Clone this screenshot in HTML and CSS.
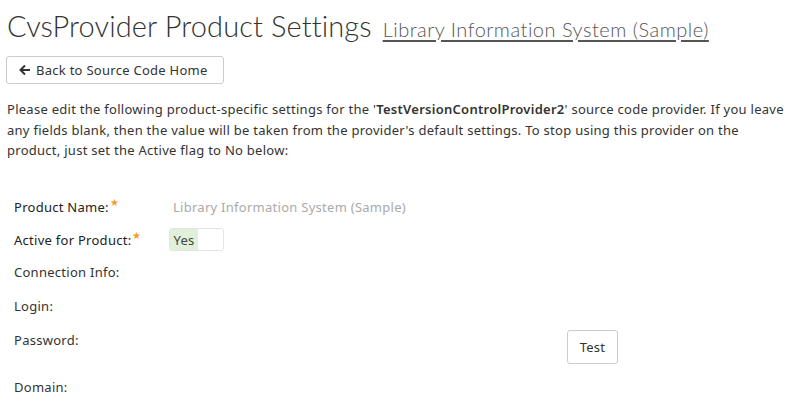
FILE: index.html
```html
<!DOCTYPE html>
<html>
<head>
<meta charset="utf-8">
<link rel="stylesheet" href="styles.css">
</head>
<body>
<div class="page">
  <h1 class="title">CvsProvider Product Settings <a class="subtitle" href="#">Library Information System (Sample)</a></h1>
  <button class="btn btn-back"><svg class="arrow" width="12" height="12" viewBox="0 0 12 12"><path d="M6 1.5 L1.5 6 L6 10.5 M1.5 6 H11" fill="none" stroke="#333" stroke-width="2" stroke-linejoin="miter"/></svg>Back to Source Code Home</button>
  <p class="intro">Please edit the following product-specific settings for the '<b>TestVersionControlProvider2</b>' source code provider. If you leave any fields blank, then the value will be taken from the provider's default settings. To stop using this provider on the product, just set the Active flag to No below:</p>
  <div class="form">
    <div class="row r-name">
      <div class="label req">Product Name:<span class="star">★</span></div>
      <div class="value muted">Library Information System (Sample)</div>
    </div>
    <div class="row r-active">
      <div class="label req">Active for Product:<span class="star">★</span></div>
      <div class="value"><div class="toggle"><span class="on">Yes</span><span class="off"></span></div></div>
    </div>
    <div class="row r-conn">
      <div class="label">Connection Info:</div>
      <div class="value"></div>
    </div>
    <div class="row r-login">
      <div class="label">Login:</div>
      <div class="value"></div>
    </div>
    <div class="row r-pass">
      <div class="label">Password:</div>
      <div class="value test-cell"><button class="btn btn-test">Test</button></div>
    </div>
    <div class="row r-domain">
      <div class="label">Domain:</div>
      <div class="value"></div>
    </div>
  </div>
</div>
</body>
</html>
```
FILE: styles.css
```css
html, body { margin: 0; padding: 0; background: #fff; }
body { font-family: "Noto Sans", "Open Sans", sans-serif; font-size: 13px; color: #333; letter-spacing: 0.27px; }
.page { padding: 0 7px; }
.title {
  margin: 0; padding-top: 6px; height: 40px;
  font-family: Lato, sans-serif; font-weight: 300; font-size: 29px; line-height: 40px;
  color: #333; letter-spacing: 0.1px; white-space: nowrap;
}
.subtitle { font-size: 20px; color: #555; text-decoration: underline; text-underline-offset: 3px; letter-spacing: 0.5px; margin-left: 3px; }
.btn {
  font-family: "Noto Sans", sans-serif; font-size: 13px; color: #333; letter-spacing: 0.27px;
  background: #fff; border: 1px solid #ccc; border-radius: 3px; cursor: pointer;
}
.btn-back { margin: 10px 0 0 -1px; height: 28px; width: 218px; padding: 0 12px; display: flex; align-items: center; gap: 5px; }
.arrow { flex: none; }
.intro { margin: 15px 0 0 0; line-height: 20.5px; }
.intro b { font-weight: 600; }
.form { margin-top: 28px; padding-left: 7px; display: flex; flex-direction: column; }
.row { display: grid; grid-template-columns: 155px 1fr; align-items: center; }
.label { color: #333; }
.req { color: #222; }
.star { color: #f39c2a; font-size: 10px; position: relative; top: -6px; margin-left: 1px; }
.muted { color: #aaa; padding-left: 4px; }
.r-name { height: 36px; }
.r-active { height: 30px; }
.toggle { display: flex; width: 55px; height: 23px; border: 1px solid #e3e3e3; border-radius: 3px; overflow: hidden; box-sizing: border-box; }
.toggle .on { background: #e0f0db; width: 28px; display: flex; align-items: center; justify-content: center; color: #444; }
.toggle .off { flex: 1; background: #fff; }
.r-conn { height: 34px; }
.r-login { height: 34px; }
.r-pass { height: 47px; align-items: start; }
.r-pass .label { line-height: 34px; }
.test-cell { padding-left: 398px; padding-top: 7px; }
.btn-test { width: 51px; height: 34px; padding: 0; }
.r-domain { height: 34px; }
```
